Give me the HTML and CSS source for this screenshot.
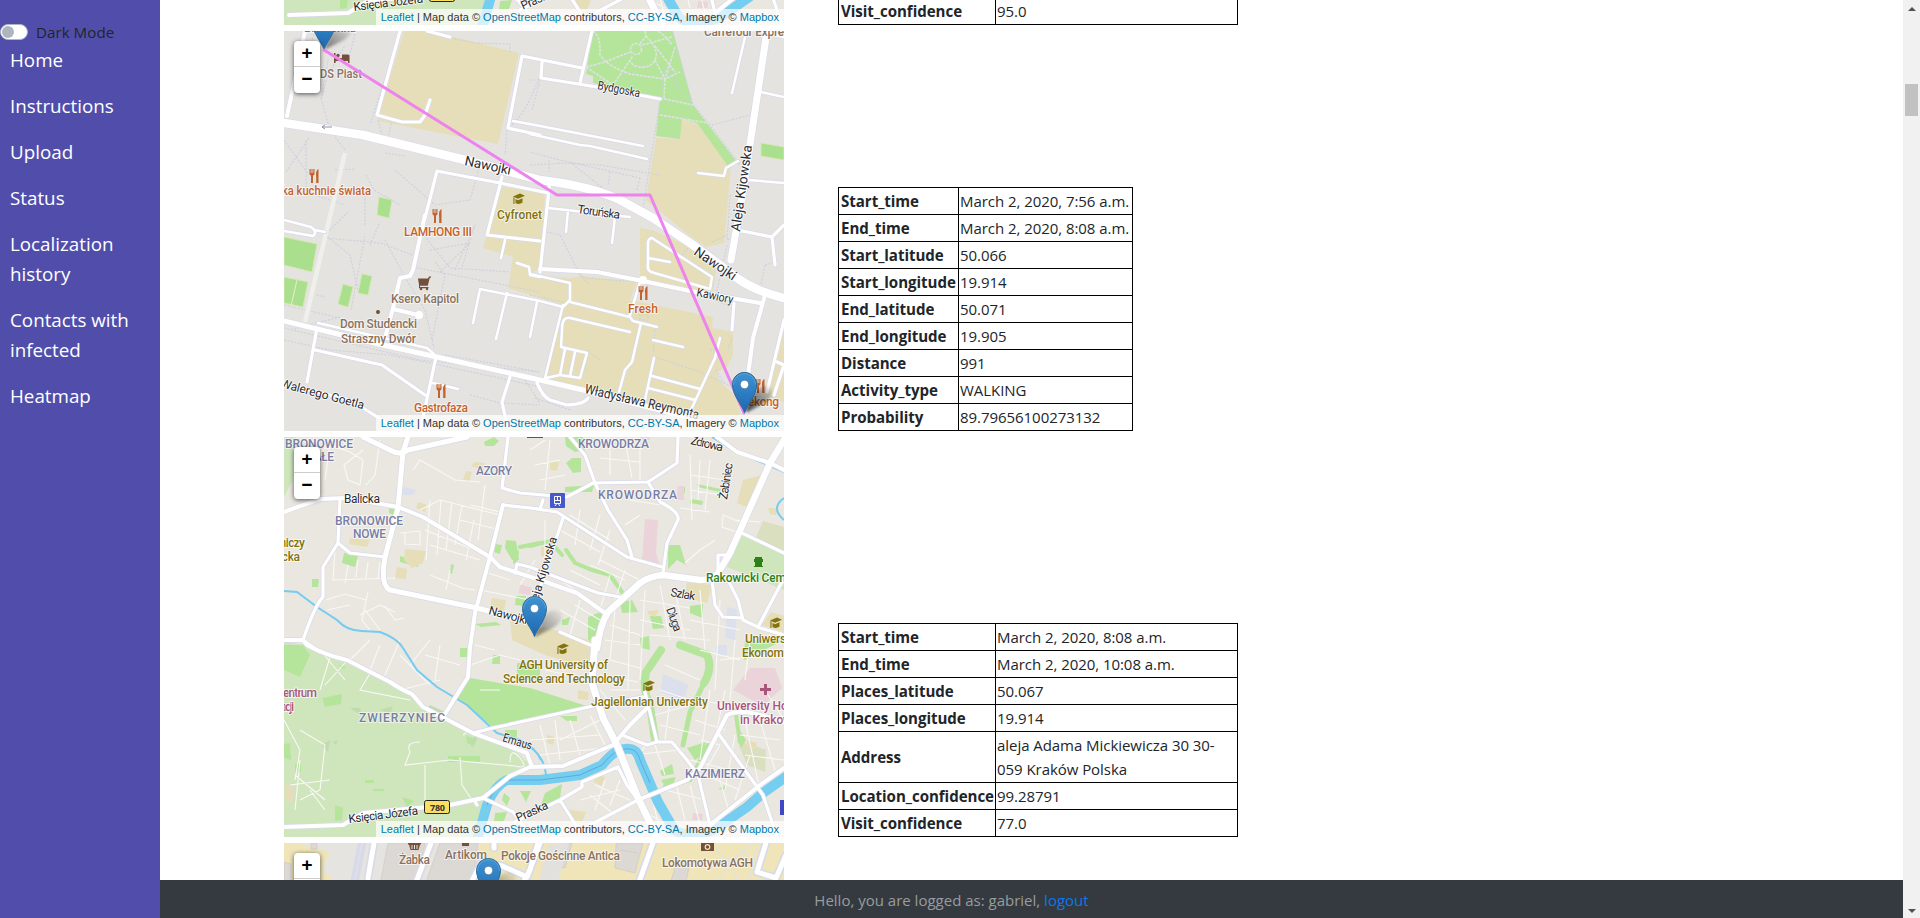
FILE: index.html
```html
<!DOCTYPE html>
<html lang="en">
<head>
<meta charset="utf-8">
<title>Localization history</title>
<link rel="stylesheet" href="styles.css">
</head>
<body>
<svg class="defs" width="0" height="0" aria-hidden="true">
  <defs>
    <linearGradient id="pinfill" x1="0" y1="0" x2="0" y2="1"><stop offset="0" stop-color="#3f93d2"/><stop offset="1" stop-color="#1c68b3"/></linearGradient>
    <linearGradient id="shade" x1="0" y1="1" x2="1" y2="0"><stop offset="0" stop-color="#000" stop-opacity=".5"/><stop offset="1" stop-color="#000" stop-opacity="0"/></linearGradient>
    <filter id="soft" x="-30%" y="-30%" width="160%" height="160%"><feGaussianBlur stdDeviation="1.8"/></filter>
    <g id="pin">
      <path d="M0 0L8-19Q17-31 27-25Q30-17 20-10Z" fill="url(#shade)" filter="url(#soft)"/>
      <path d="M0-.5C-2-7-12-18-12-28.5A12 12 0 0 1 12-28.5C12-18 2-7 0-.5Z" fill="url(#pinfill)" stroke="#2e6c97" stroke-width="1"/>
      <path d="M-11-28.5A11 11 0 0 1 11-28.5" fill="none" stroke="#6cb0e0" stroke-opacity=".6"/>
      <circle cy="-28.5" r="4.2" fill="#fff" stroke="#2e6c97" stroke-width=".6"/>
    </g>
    <g id="food"><path d="M-4.5-7v4.5q0 2 1.5 2V7h2V-.5q1.500 0 1.500-2V-7h-1.200v4h-.8v-4h-1v4h-.8v-4Z"/><path d="M2.200 7V1.500Q1.200-6 4.500-7V7Z"/></g>
    <g id="grad"><path d="M-6-2.500 1-5.500 6-3.200-1-.3Z"/><path d="M-3.500 0-1 1.300 3.500-.8V3.500Q0 6-3.500 4ZM-5.600-1.800h1.100V5h-1.100Z"/></g>

    <g id="roadsA">
      <path class="w9" d="M284 123 363 135 465 160 540 180Q590 186 620 200L653 218 693 245 737 278Q755 291 784 298"/>
      <path class="w8" d="M767 31 743 191 731 260"/>
      <path class="w5" d="M305 31 297 70 287 116M765 295 753 338 748 375 746 413"/>
      <path class="w6" d="M284 321 383 345 437 357 540 380 583 390 690 418 725 431"/>
      <path class="w4" d="M400 31 377 115 402 122 420 122 425 115 430 100M427 31 450 37M522 56 508 128 540 135M522 56 582 68M592 31 580 83M542 62 541 78 597 87 660 99"/>
      <path class="w4" d="M425 218 437 171 500 183 548 193M502 177 487 235 540 241M550 180 540 272"/>
      <path class="w5" d="M425 215 413 270 410 276 400 278 393 308 385 338M393 309 418 315M540 269 597 272 643 281 690 291 760 303"/>
      <path class="w4" d="M317 328 307 382M315 350 382 365 425 395M436 357 420 431M284 384 350 400 400 431M510 377 502 402 507 425"/>
      <path class="w3" d="M530 124 643 146M530 134 580 145 590 146 647 159M513 121 540 126M745 37 732 93M761 92 784 97M698 173 724 176 726 168 738 161M748 180 784 183M318 323 427 348 434 354M433 383 458 389"/>
      <path class="w3" d="M284 220 311 227Q318 232 313 236L284 231M315 230 325 232M473 323 480 289 540 301 563 307 570 300 570 283 530 274M507 293 496 339M537 302 530 337M517 263 529 267 530 275 540 277M505 240 501 258"/>
      <path class="w3" d="M548 208 630 217M568 210 566 232M615 217 612 243M570 302 630 317 633 321 657 327M640 282 630 315M563 305 545 378M630 332 570 318Q562 316 562 330L561 347 587 353 580 378 560 375 546 378M565 349 560 375M575 352 570 376"/>
      <path class="w3" d="M641 323 632 362 625 370 619 392M653 340 683 347M654 358 645 400M652 376 700 389M648 388 695 400M720 338 715 358 690 412M652 238 712 277 710 289 651 272Q647 270 648 264L648 242Q649 238 652 238M648 258 670 262"/>
      <path class="w4" d="M737 230 772 237 784 225M772 237 775 265M734 303 732 330M784 320 767 392M777 362 784 365M774 395 784 365M537 383Q543 397 550 400L567 405Q585 404 588 398M761 31 784 37"/>
    </g>

    <g id="roadsB">
      <path class="w8" d="M595 640 592 683 603 718 617 745 638 798 657 837"/>
      <path class="w7" d="M597 648Q600 625 608 612L640 583Q650 576 663 575L700 580Q714 580 718 573L730 553 770 463 784 440"/>
      <path class="w6" d="M363 437 390 450Q400 456 408 450L467 437M408 437 403 452 398 508 385 557Q380 585 390 590L477 608 500 614 540 625"/>
      <path class="w5" d="M284 512 320 499 347 498 398 507 423 517 490 557 500 567 540 580 577 593 605 613M503 505 490 557 475 613 470 648 468 677 445 714M717 437 737 452 770 463 784 470"/>
      <path class="w5" d="M284 640 303 640 307 645Q325 655 347 660L390 682Q402 690 412 694L423 707 473 733 527 753 532 767M647 708 630 725 613 745 563 766 530 767 510 776 483 798 450 805 363 813 343 825 284 827"/>
      <path class="w5" d="M638 800 687 780 700 768 727 715Q733 712 743 712T784 722M710 825 760 785 784 768"/>
      <path class="w4" d="M340 498 338 543 323 567 323 597Q315 605 303 640L317 650M338 543 350 553 385 557M508 437 502 488 520 493 567 497 593 483 648 482 677 463 678 437M503 505 540 509 543 500M530 508 557 512 627 557 662 567M563 518 537 597"/>
      <path class="w4" d="M570 437 585 455 595 483 608 510 627 540 632 557M648 482 660 502Q680 512 678 520L667 543 663 573M742 533 784 553M712 580 715 605 723 617 742 618M727 578 738 600 743 620 760 628 784 635M718 573 718 555 730 555M758 627 784 578"/>
      <path class="w4" d="M515 573 517 564 530 567 598 593 620 597M560 632 595 647M473 733 493 728 598 705 643 697M645 692 657 742 672 742 687 760 698 775 710 825M622 735 647 745 657 742M718 733 763 795 777 837M618 767 582 782 582 787 560 800 515 822M618 767 627 785 638 800 590 825M560 800 580 832M483 798 513 812 525 828M477 805Q473 800 478 799"/>
    </g>

    <g id="city">
      <rect x="270" y="430" width="530" height="410" fill="#eae7e1"/>
      <path class="forest" d="M270 640 307 645 347 660 390 682 427 708 473 733 513 748 532 767 507 777 483 798 477 840H270ZM284 437 296 437 293 480 284 497ZM742 533 784 553V590L727 567Z"/>
      <path fill="#d9dfbf" d="M763 521 784 527V552L755 540ZM737 740 766 750 765 772 747 765Z"/>
      <path class="green" d="M470 678 530 688 593 708 530 719 493 727 457 698ZM284 645H303L310 655 300 677 284 670ZM484 442 494 437 499 441 494 446 485 446ZM565 437H583L585 450 575 452 566 446ZM566 463 572 458 581 458 581 472 573 473ZM344 553 358 556 355 567 342 563ZM400 556 412 560 420 553 418 567 400 562ZM312 579 319 579 318 587 312 587ZM495 544 502 545 500 554 494 552ZM506 540 516 541 519 560 512 560 505 548ZM516 596 526 596 524 606 515 605ZM496 622 501 625 481 627 475 624ZM668 545 680 545 686 565 677 560 668 569ZM588 617 603 611 595 648H588ZM620 602 632 600 638 612 622 613ZM650 616 661 616 664 628 653 629ZM690 606 703 604 702 618 690 613ZM640 638 649 636 650 650 641 648ZM565 487 594 485 592 492 565 492ZM697 484 721 489 720 492 698 487ZM679 487H685V493H679ZM691 499 703 501 702 505 690 503ZM687 748 706 742 703 755 695 760ZM545 793 562 784 560 798 540 808ZM660 771 672 764 674 774 662 776ZM661 780 675 777 676 784 665 786ZM735 723 746 740 741 748ZM460 648H467V657H460ZM493 655H500V664H492ZM517 663H540V680H517ZM505 730H517V737H505ZM284 744 290 743 291 760 284 758ZM295 764H301V772H295ZM322 698 342 694 341 704 325 707ZM335 805 343 808 342 820 335 821ZM448 756H480V762H448ZM365 780H374V783H365ZM373 789H384V791H373ZM560 716H577V721H567ZM718 789 726 785 725 790ZM389 507 396 506 393 515 389 513ZM784 640 745 640 744 660ZM562 620 570 617 568 625 562 625ZM339 665 347 667 342 669ZM466 736 477 739 474 746 467 743ZM504 793 510 798 507 806 502 800ZM520 791 531 791 526 802ZM495 813 507 812 504 821 494 822ZM402 797 414 801 407 807ZM451 564 454 565 452 574 450 573Z"/>
      <g fill="none" stroke="#b4e59b" stroke-linecap="round">
        <path stroke-width="8" d="M661 650 646 672Q642 690 650 705L655 740M680 645 707 655Q713 668 704 683"/>
        <path stroke-width="5" d="M704 683 690 712 683 745"/>
        <path stroke-width="4" d="M566 550 575 563 592 570 610 575 622 592M530 546 550 541 562 555M520 547 540 543M517 552 515 562M665 786 690 780 708 745M735 708 740 742"/>
      </g>
      <path class="campus" d="M510 618 555 630 595 642 590 668 545 655 512 640ZM687 582 712 585 707 603 685 597ZM743 480 762 475 755 500 747 507 737 503ZM405 549 426 551 423 563 412 568 404 560ZM350 538 370 540 367 547 349 544ZM397 567 407 569 406 579 395 578ZM418 502 427 505 425 512 416 508ZM475 462 485 463 483 470 471 466ZM466 471 472 472 469 482 463 480ZM492 598 506 600 504 612 490 607ZM541 547 550 548 549 557 541 556ZM550 461 559 462 557 471 550 470ZM771 612 784 616V632L762 625ZM747 740 757 743 755 750 746 747ZM595 775 605 777 602 786 594 782ZM570 810 586 812 582 822 572 820ZM578 690 589 692 588 700 578 699ZM547 735 555 737 553 745 547 743ZM648 611 659 610 655 617 648 614ZM768 508 778 508 776 515 770 514Z"/>
      <path fill="#ead4da" d="M645 519 658 520 656 553 660 565 642 560ZM750 668 775 668 782 688 763 706 733 690ZM678 486H684V500H676ZM520 584 532 588 530 595 519 593ZM693 813 703 814 702 820 692 820ZM640 437H650V440H640Z"/>
      <path fill="#dbe0ec" d="M663 674 689 685 683 700 660 692ZM727 607 737 609 735 640 725 638ZM403 487 417 490 412 495 402 495ZM716 645H727V655H716Z"/>
      <path fill="#c1dbae" d="M380 710 393 706 390 714ZM430 705 445 712 440 720 425 712ZM470 740 478 735 472 748ZM322 745 330 740 328 752ZM350 708 360 708 362 716ZM333 742 338 740 336 745Z"/>
      <path fill="#e6dcba" d="M286 785H294V802H286Z"/>
      <path class="lane" d="M316 455 330 445 350 452 363 460M330 445 325 480M363 460 360 485 348 480 344 465 363 450M380 440 375 475 366 485M300 470 318 480 310 500M413 470 420 460 455 480 480 482M420 510 440 500 500 515M430 500 426 560M441 500 437 555M452 502 446 550M462 505 455 545M474 520 466 560M485 485 478 540M425 530 470 548M430 545 480 560M460 520 500 530M470 505 500 512M400 533 420 531 420 545 405 544 405 533M335 550 333 580 395 578M348 565 345 583M358 560 356 577M368 562 366 578M380 562 378 578M430 575 462 588 475 590M450 570 446 590M326 600 345 594 366 600M327 610 350 605M365 610 380 630M360 615 380 605 395 612M368 592 362 620 370 630M385 606 395 620 404 618M480 590 530 600M485 572 510 580M520 585 535 560M545 520 545 560M560 530 600 552M570 515 610 540M580 510 575 545M600 515 590 550M610 530 598 565M640 515 625 525M630 500 660 505M610 445 610 475M625 440 632 478M600 458 640 462M640 445 640 480M530 450 545 440M535 465 560 460M540 480 565 475M550 440 545 490M690 455 692 520M700 460 698 500M710 460 705 510M690 475 725 480M690 490 720 495M680 508 710 512M723 515 740 522 737 532 722 527ZM735 520 760 522M685 563 700 550 715 540"/>
      <path class="lane" d="M560 580 590 600M570 570 600 585M590 565 625 580M600 560 640 580M610 575 600 610M625 570 615 600M575 605 600 620M560 610 595 630M580 600 570 635M610 625 640 635M605 640 640 645M615 610 610 660M630 600 628 690M645 590 640 680M610 660 640 668M600 675 638 682M660 585 670 640M640 600 690 608M640 620 690 630M650 635 710 640M675 590 685 640M700 590 705 650M720 600 715 690M690 620 740 630M700 650 740 660M720 660 770 655M735 640 730 700M750 640 745 680M665 665 700 680M660 690 690 700M655 715 690 705M660 725 700 735M670 700 665 740M695 720 725 730M700 740 720 745M710 690 700 760M725 690 715 740M700 700 740 708M690 760 730 770M705 775 740 790M720 745 700 780M735 735 725 790M750 755 735 800M665 790 705 800M675 780 685 820M690 785 700 825M720 780 730 815M745 720 760 790M760 720 775 770M740 735 780 740M745 755 784 760M765 690 784 720M600 720 560 740M590 715 605 745M570 720 580 755M555 720 560 760M540 725 550 765M530 740 600 735M540 755 605 748M595 785 630 800M590 795 615 815M605 780 595 810M620 780 610 805M580 800 620 790M645 745 640 755M630 755 680 750M650 790 660 830M640 810 660 820M655 745 665 775M600 690 625 720M610 690 640 690M545 670 590 680M470 665 500 655 520 660M475 645 495 650M425 655 460 665M430 640 410 665M440 645 435 680M400 655 430 685M370 640 350 660M380 645 370 670M400 640 385 675M320 650 345 680M330 657 320 690M345 663 325 685M372 670 360 690 410 700M400 690 440 680M480 690 500 690M300 730 325 745 320 790 300 800M284 720 300 750 295 780M290 785 330 780M295 775 325 800M300 760 295 810M310 790 325 810M420 742Q405 742 410 752L405 765 450 760 515 766Q530 770 520 758T510 762M425 765 425 805M460 757 462 785 472 800M470 730 463 735"/>
      <path class="stream" d="M284 591 297 592 317 607 337 620Q347 631 362 631L380 632Q397 638 403 648L417 670 437 687 467 705 497 733 520 740Q536 748 541 760M530 747Q545 758 546 775M712 437 733 450 784 472M784 498Q770 508 784 520"/>
      <path class="river" d="M477 840 487 805Q495 785 507 780L540 780 580 775 602 765Q615 749 625 749Q637 747 640 760L658 802 673 828Q677 834 690 834 707 834 717 828L747 807 763 793 790 774"/>
      <path d="M487 805Q495 785 507 780L540 780 580 775 602 765Q615 749 625 749Q637 747 640 760L650 783" fill="none" stroke="#59ace0"/>
      <use href="#roadsB" class="road casing"/><use href="#roadsB" class="road"/>
      <g class="lbl area">
        <text x="285" y="448" textLength="68">BRONOWICE</text><text x="304" y="461" textLength="30">MAŁE</text><text x="476" y="475" textLength="36">AZORY</text><text x="578" y="448" textLength="71">KROWODRZA</text><text x="598" y="499" textLength="79">KROWODRZA</text><text x="335" y="525" textLength="68">BRONOWICE</text><text x="353" y="538" textLength="33">NOWE</text><text x="359" y="722" textLength="86">ZWIERZYNIEC</text><text x="685" y="778" textLength="60">KAZIMIERZ</text>
      </g>
      <g class="lbl street">
        <text x="344" y="503" textLength="36">Balicka</text><text transform="translate(690 444) rotate(13)" textLength="33">Zdrowa</text><text transform="translate(727 500) rotate(-81)" textLength="37">Żabiniec</text><text transform="translate(488 614) rotate(15)" textLength="40">Nawojki</text><text transform="translate(535 611) rotate(-73)" textLength="76">Aleja Kijowska</text><text transform="translate(670 596) rotate(10)" textLength="25">Szlak</text><text transform="translate(666 609) rotate(70)" textLength="25">Długa</text><text transform="translate(502 741) rotate(17)" textLength="30" lengthAdjust="spacingAndGlyphs">Emaus</text><text transform="translate(349 823) rotate(-7)" textLength="70">Księcia Józefa</text><text transform="translate(518 822) rotate(-24)" textLength="34">Praska</text>
      </g>
      <g class="lbl olive">
        <text x="268" y="547" textLength="37">rolniczy</text><text x="263" y="561" textLength="37">Balicka</text><text x="519" y="669" textLength="89">AGH University of</text><text x="503" y="683" textLength="122">Science and Technology</text><text x="591" y="706" textLength="117">Jagiellonian University</text><text x="745" y="643" textLength="60">Uniwersytet</text><text x="742" y="657" textLength="68">Ekonomiczny</text>
        <use href="#grad" x="563" y="649"/><use href="#grad" x="649" y="686"/><use href="#grad" x="776" y="623"/>
      </g>
      <g class="lbl cemetery"><text x="706" y="582" textLength="106">Rakowicki Cemetery</text><path d="M755 557h7v2h1v3h-1v4h1v1h-9v-1h1v-4h-1v-3h1Z"/></g>
      <g class="lbl health"><text x="717" y="710" textLength="100">University Hospital</text><text x="740" y="724" textLength="52">in Krakow</text><text x="276" y="697" textLength="41">Centrum</text><text x="248" y="711" textLength="46">Rehabilitacji</text><path d="M764 684h3v4h4v3h-4v4h-3v-4h-4v-3h4Z"/></g>
      <rect x="424.500" y="800.500" width="25" height="13" rx="2" fill="#fbdf61" stroke="#222"/><text class="shield" x="430" y="811" textLength="15">780</text>
      <rect x="550" y="493" width="15" height="15" rx="1" fill="#4459cc"/><path d="M554.500 496.500h6v7h-6ZM554.500 500.500h6M557.500 496v4M555 506l1.500-2M560 506l-1.500-2" fill="none" stroke="#fff"/>
      <rect x="780" y="800" width="15" height="15" fill="#3f47c4"/><rect x="527" y="436" width="16" height="2" fill="#b52f38"/>
    </g>
  </defs>
</svg>

<div class="app">
  <nav class="sidebar">
    <label class="switch"><span class="switch-track"></span>Dark Mode</label>
    <a>Home</a><a>Instructions</a><a>Upload</a><a>Status</a><a>Localization history</a><a>Contacts with infected</a><a>Heatmap</a>
  </nav>
  <div class="page">
    <main class="history">
      <section class="entry">
        <div class="map">
          <svg viewBox="279 437 500 400"><use href="#city"/></svg>
          <div class="attribution"><a>Leaflet</a> | Map data © <a>OpenStreetMap</a> contributors, <a>CC-BY-SA</a>, Imagery © <a>Mapbox</a></div>
        </div>
        <table class="facts visit"><tr><th>Visit_confidence</th><td>95.0</td></tr></table>
      </section>

      <section class="entry">
        <div class="map">
          <svg viewBox="284 31 500 400">
            <rect x="284" y="31" width="500" height="400" fill="#e4e3e0"/>
            <path class="campus" d="M404 31H430L519 53 498 144 377 121ZM682 120 697 123 731 166 724 243 706 247 690 236 646 200 656 138 680 139ZM502 187 545 193 540 268 530 275 570 278 583 276 637 282 630 300 713 317 712 328 733 332 733 355 727 367 717 372 720 382 740 400V415H700L693 412 583 390 543 378 563 305 508 288 513 257 483 248ZM640 228 652 230 690 247 717 262 713 293 640 278ZM784 320 763 395 784 402Z"/>
            <path class="green" d="M593 31H673L693 105 737 162 728 166 697 123 682 119 680 139 656 136 660 98 593 83V76L586 74Z"/>
            <path class="pitch" d="M761 143 784 147V160L761 156ZM379 197 392 200 389 218 377 215ZM284 237 317 244 312 272 284 265ZM284 277 308 282 303 307 284 303ZM343 284 353 287 348 307 338 304ZM362 274 372 276 368 295 358 293Z"/>
            <path d="M297 280 291 306" stroke="#e5f0c9"/>
            <path class="foot" d="M315 31 288 112M284 140 309 175M309 138 286 172M306 140V195M321 98 330 130 345 150M328 60 321 100 328 75 345 45M355 34 348 62M398 38 370 125M430 34 475 43 510 44V52M540 75Q528 110 512 125M507 130 505 155M480 165 470 200 435 205 395 170M378 120 383 138M392 120 388 138M385 153 405 156M335 170 355 169M366 175 374 190 400 205M365 195V225M348 212 325 235 350 255 358 290M351 310 365 235M325 238 380 243 413 255M385 240 402 272 425 310 434 348M370 245 380 222M420 230 450 268 510 272M430 250 470 243 440 272M435 262 445 275 432 340M455 270 475 225 462 267M413 267 540 292M340 317 290 330M284 328 420 360 540 372M284 340 330 350 390 355 435 364 540 387M445 355 540 372M525 380 540 403M470 395 500 403 540 405M284 305 340 318M318 196 345 205M317 295 325 297M530 152 560 160 640 178M530 165 565 163 600 165 660 175M570 162 605 190M610 172 608 185M640 178 637 190M549 160V172M643 208 665 70 693 105 660 98M665 70 680 72M672 31 693 105 710 125 740 165M712 125 750 115M530 80H540L532 110M547 232 560 235 580 275 585 278 637 282M580 275 590 285M530 295 563 302M535 398 570 410M588 350 585 370M590 353 600 360M655 330 653 352M655 357 700 372 730 386M710 350H720M730 195 727 240 740 235M727 245 715 300 730 306M680 258 690 245M712 242 727 235M765 265 775 262M765 265 760 290M640 320V315H648V320ZM732 338 728 350M716 370 725 385"/>
            <path class="parkway" d="M593 31Q601 36 600 55Q607 66 630 74L665 79 680 72M586 67 605 62 630 52M586 67 613 85 633 56M640 44 646 36 645 31M646 36Q660 50 655 60T635 66L630 62M642 45 672 37M665 79 664 98M655 60 665 79 675 47M655 46 675 72M660 98 693 105M660 115 708 123M658 31Q668 38 672 45"/><circle cx="636" cy="49" r="5.500" class="parkway"/>
            <path d="M345 153 305 322" stroke="#efefeb" stroke-width="4.500" fill="none"/>
            <use href="#roadsA" class="road casing"/><use href="#roadsA" class="road"/>
            <circle cx="419" cy="315" r="4" fill="#fff"/><circle cx="643" cy="280" r="4" fill="#fff"/>
            <path d="M322 127h10M322 127l3-2M322 127l3 2" fill="none" stroke="#8e92a8"/>
            <g class="lbl street">
              <text transform="translate(597 89) rotate(11)" textLength="43" lengthAdjust="spacingAndGlyphs">Bydgoska</text><text class="big" transform="translate(464 165) rotate(12)" textLength="47">Nawojki</text><text transform="translate(577 213) rotate(8)" textLength="43">Toruńska</text><text class="big" transform="translate(740 232) rotate(-82)" textLength="87">Aleja Kijowska</text><text class="big" transform="translate(693 254) rotate(34)" textLength="48">Nawojki</text><text transform="translate(696 296) rotate(12)" textLength="37" lengthAdjust="spacingAndGlyphs">Kawiory</text><text class="big" transform="translate(584 393) rotate(13)" textLength="117" lengthAdjust="spacingAndGlyphs">Władysława Reymonta</text><text transform="translate(280 387) rotate(15)" textLength="86">Walerego Goetla</text><text transform="translate(281 104) rotate(-70)" textLength="12">a</text>
            </g>
            <g class="lbl shop">
              <text x="304" y="32" textLength="52">Biedronka</text><text x="320" y="78" textLength="42" lengthAdjust="spacingAndGlyphs">DS Piast</text><text x="704" y="36" textLength="92">Carrefour Express</text><text x="391" y="303" textLength="68">Ksero Kapitol</text><text x="340" y="328" textLength="77">Dom Studencki</text><text x="341" y="343" textLength="75">Straszny Dwór</text>
              <path d="M334 53h1.500v5H342v-3.500h6q1.500 0 1.500 1.500v7H348v-2h-12.500v2H334Z" class="ink"/><circle cx="338" cy="55.500" r="1.700" class="ink"/><circle cx="378" cy="312" r="2" class="ink"/>
              <path d="M418 278.500h10l1-2h2v1.200h-1.200l-2 8H420v1.300h8.500v1.200H419v-3.500Z" class="ink"/><circle cx="421" cy="289" r="1.200" class="ink"/><circle cx="427" cy="289" r="1.200" class="ink"/>
            </g>
            <g class="lbl foodtext">
              <text x="282" y="195" textLength="89" lengthAdjust="spacingAndGlyphs">ka kuchnie świata</text><text x="404" y="236" textLength="68">LAMHONG III</text><text x="414" y="412" textLength="54">Gastrofaza</text><text x="628" y="313" textLength="30">Fresh</text><text x="738" y="406" textLength="41">Mekong</text>
              <use href="#food" x="314" y="176"/><use href="#food" x="437" y="216"/><use href="#food" x="441" y="391"/><use href="#food" x="643" y="293"/><use href="#food" x="760" y="386"/>
            </g>
            <g class="lbl olive"><text x="497" y="219" textLength="45">Cyfronet</text><use href="#grad" x="519" y="199"/></g>
            <use href="#pin" x="324" y="50"/><use href="#pin" x="744.500" y="413"/>
            <path d="M324 50 557 195H650L744 413" fill="none" stroke="#ee82ee" stroke-width="3" stroke-linejoin="round" stroke-linecap="round"/>
            <use href="#pin" x="744.500" y="413"/>
          </svg>
          <div class="zoom"><a>+</a><a>−</a></div>
          <div class="attribution"><a>Leaflet</a> | Map data © <a>OpenStreetMap</a> contributors, <a>CC-BY-SA</a>, Imagery © <a>Mapbox</a></div>
        </div>
        <table class="facts trip">
          <tr><th>Start_time</th><td>March 2, 2020, 7:56 a.m.</td></tr>
          <tr><th>End_time</th><td>March 2, 2020, 8:08 a.m.</td></tr>
          <tr><th>Start_latitude</th><td>50.066</td></tr>
          <tr><th>Start_longitude</th><td>19.914</td></tr>
          <tr><th>End_latitude</th><td>50.071</td></tr>
          <tr><th>End_longitude</th><td>19.905</td></tr>
          <tr><th>Distance</th><td>991</td></tr>
          <tr><th>Activity_type</th><td>WALKING</td></tr>
          <tr><th>Probability</th><td>89.79656100273132</td></tr>
        </table>
      </section>

      <section class="entry">
        <div class="map">
          <svg viewBox="284 437 500 400"><use href="#city"/><use href="#pin" x="534.500" y="637"/></svg>
          <div class="zoom"><a>+</a><a>−</a></div>
          <div class="attribution"><a>Leaflet</a> | Map data © <a>OpenStreetMap</a> contributors, <a>CC-BY-SA</a>, Imagery © <a>Mapbox</a></div>
        </div>
        <table class="facts visit">
          <tr><th>Start_time</th><td>March 2, 2020, 8:08 a.m.</td></tr>
          <tr><th>End_time</th><td>March 2, 2020, 10:08 a.m.</td></tr>
          <tr><th>Places_latitude</th><td>50.067</td></tr>
          <tr><th>Places_longitude</th><td>19.914</td></tr>
          <tr><th>Address</th><td>aleja Adama Mickiewicza 30 30-<br>059 Kraków Polska</td></tr>
          <tr><th>Location_confidence</th><td>99.28791</td></tr>
          <tr><th>Visit_confidence</th><td>77.0</td></tr>
        </table>
      </section>

      <section class="entry">
        <div class="map">
          <svg viewBox="284 843 500 400">
            <rect x="284" y="843" width="500" height="400" fill="#e5e4e1"/>
            <path fill="#efe5b9" d="M284 843H299L317 849 330 852 322 870 340 885H284ZM480 843H784V885H470Z"/>
            <path fill="#dcd8d4" stroke="#cbc6c2" stroke-width=".6" d="M284 862 291 864V885H284ZM311 843H317V849H311ZM388 843H425L417 885H380ZM440 843H478L472 885H425ZM565 843H572L565 868 559 867ZM616 843H643L635 873 615 868ZM677 860 690 864 685 885H670ZM620 850 637 853"/>
            <path fill="#e2e1de" d="M548 845 569 843 557 885H538Z"/>
            <path class="road casing w8" d="M431 843 415 885M374 843 368 878M362 843 354 885M482 860 470 885M538 843 530 870 522 885M653 843 638 885M500 865 527 877 540 843M766 843 757 872 776 878 786 855M494 843V848"/>
            <path class="road w6" d="M431 843 415 885M374 843 368 878M480 865 470 885M538 843 530 870 522 885M653 843 638 885M500 865 527 877 540 843M766 843 757 872 776 878 786 855M494 843V848"/>
            <path class="parkway" d="M362 843 354 885M715 850 730 862 752 843M712 865 730 862 715 885M730 862 745 850 755 870M730 862 740 885M758 843 748 885"/>
            <g class="lbl shop"><text x="399" y="864" textLength="31">Żabka</text><text x="445" y="859" textLength="42">Artikom</text><text x="501" y="860" textLength="119">Pokoje Gościnne Antica</text><text x="662" y="867" textLength="91">Lokomotywa AGH</text>
              <path class="ink" d="M408 843h13v1.500h-1l-1.500 5.500h-8l-1.500-5.500H408ZM462 843h7v3h-7ZM701 843h13v8h-13Z"/><path d="M412 845v4M414.500 845v4M417 845v4" stroke="#e5e4e1" fill="none"/><circle cx="707.500" cy="847" r="2.300" fill="none" stroke="#efe5b9" stroke-width="1.200"/>
            </g>
            <use href="#pin" x="488.500" y="899"/>
          </svg>
          <div class="zoom"><a>+</a><a>−</a></div>
        </div>
      </section>
    </main>
    <footer class="footer">Hello, you are logged as: gabriel,&nbsp;<a>logout</a></footer>
  </div>
  <div class="scrollbar"><i class="arrow up"></i><i class="thumb"></i><i class="arrow down"></i></div>
</div>
</body>
</html>
```
FILE: styles.css
```css
* { box-sizing: border-box; }
html, body { margin: 0; height: 100%; overflow: hidden; }
body { font-family: "Open Sans", "Noto Sans", sans-serif; font-size: 15px; line-height: 24px; color: #212529; background: #fff; }
.defs { position: absolute; }
.app { display: flex; height: 918px; }

.sidebar { width: 160px; flex: none; background: #514eab; padding-top: 21px; display: flex; flex-direction: column; }
.switch { display: flex; align-items: center; gap: 8px; height: 24px; padding-bottom: 2px; font-size: 15.2px; }
.switch-track { width: 28px; height: 16px; border: 1px solid #adb5bd; border-radius: 8px; background: #fff; display: flex; align-items: center; padding-left: 1px; }
.switch-track::before { content: ""; width: 12px; height: 12px; border-radius: 50%; background: #adb5bd; }
.sidebar a { color: #fff; font-size: 18.8px; line-height: 30px; padding: 0 10px; margin-bottom: 16px; }

.page { flex: 1; display: flex; flex-direction: column; min-width: 0; }
.history { flex: 1; min-height: 0; overflow: hidden; padding-left: 124px; display: flex; flex-direction: column; gap: 6px; }
.entry { flex: none; display: flex; align-items: flex-end; gap: 54px; height: 400px; }
.entry:first-child { margin-top: -375px; }

.map { position: relative; width: 500px; height: 400px; flex: none; overflow: hidden; }
.map > svg { display: block; width: 500px; height: 400px; }
.zoom { position: absolute; left: 10px; top: 10px; width: 26px; border-radius: 4px; background: #fff; box-shadow: 0 1px 5px rgba(0, 0, 0, .65); }
.zoom a { display: block; height: 26px; text-align: center; color: #000; font: bold 19px/27px "Liberation Mono", monospace; }
.zoom a:first-child { border-bottom: 1px solid #ccc; }
.attribution { position: absolute; right: 0; bottom: 0; height: 16px; padding: 0 5px; background: rgba(255, 255, 255, .7); color: #333; font: 11px/16px "Liberation Sans", Arial, sans-serif; letter-spacing: .015px; white-space: nowrap; }
.attribution a { color: #0078a8; }

.facts { border-collapse: collapse; table-layout: fixed; }
.facts th, .facts td { border: 1px solid #000; padding: 1px; height: 27px; text-align: left; white-space: nowrap; }
.facts th { font-weight: 700; font-size: 15.1px; padding-left: 2px; letter-spacing: -.05px; }
.facts td { font-weight: 400; letter-spacing: -.05px; }
.trip { width: 295px; }
.trip th { width: 120px; }
.visit { width: 400px; }
.visit th { width: 157px; }

.footer { flex: none; height: 38px; display: flex; align-items: center; justify-content: center; padding: 2px 160px 0 0; background: #343a40; color: #999c9f; }
.footer a { color: #0b78ee; }

.scrollbar { width: 17px; flex: none; background: #f1f1f1; display: flex; flex-direction: column; align-items: center; padding: 7px 0 5px; }
.arrow { border: 4px solid transparent; }
.up { border-top: 0; border-bottom-color: #505050; }
.down { border-bottom: 0; border-top-color: #505050; margin-top: auto; }
.thumb { width: 13px; height: 32px; margin-top: 73px; background: #c1c1c1; }

.campus { fill: #e5deb8; }
.green { fill: #b4e59b; }
.forest { fill: #cfe6bd; }
.pitch { fill: #a9df8d; stroke: #d5e7b0; }
.foot { fill: none; stroke: #cdd0dd; stroke-width: 1.1; stroke-dasharray: 2 1.5; }
.parkway { fill: none; stroke: #dfe2e4; stroke-width: 1.6; stroke-dasharray: 3 1; }
.lane { fill: none; stroke: #f9f8f6; stroke-width: 1.1; }
.stream { fill: none; stroke: #75cbf0; stroke-width: 2; }
.river { fill: none; stroke: #75cdf0; stroke-width: 10; stroke-linejoin: round; }
.road { fill: none; stroke: #fff; stroke-linecap: round; stroke-linejoin: round; --c: 0px; }
.road.casing { stroke: #d9dae8; --c: 1.4px; }
.w3, .w4, .w5, .w6, .w7, .w8, .w9 { stroke-width: calc(var(--w) + var(--c)); }
.w3 { --w: 2.5px; }
.w4 { --w: 3.2px; }
.w5 { --w: 4px; }
.w6 { --w: 5px; }
.w7 { --w: 6.5px; }
.w8 { --w: 7px; }
.w9 { --w: 8.5px; }
.lbl text { font-family: Roboto, "Open Sans", sans-serif; font-size: 12px; font-weight: 500; paint-order: stroke; stroke: rgba(255, 255, 255, .65); stroke-width: 2px; stroke-linejoin: round; }
.lbl.street text { font-weight: 400; }
.lbl .big { font-size: 13.5px; }
.area { fill: #787da5; }
.street { fill: #2c2c31; }
.olive { fill: #82730f; }
.shop { fill: #8a7160; }
.ink { fill: #74503a; }
.foodtext { fill: #c4622d; }
.cemetery { fill: #2f8018; }
.health { fill: #a8557a; }
.shield { font: bold 9px "Open Sans", sans-serif; fill: #333; }
```
